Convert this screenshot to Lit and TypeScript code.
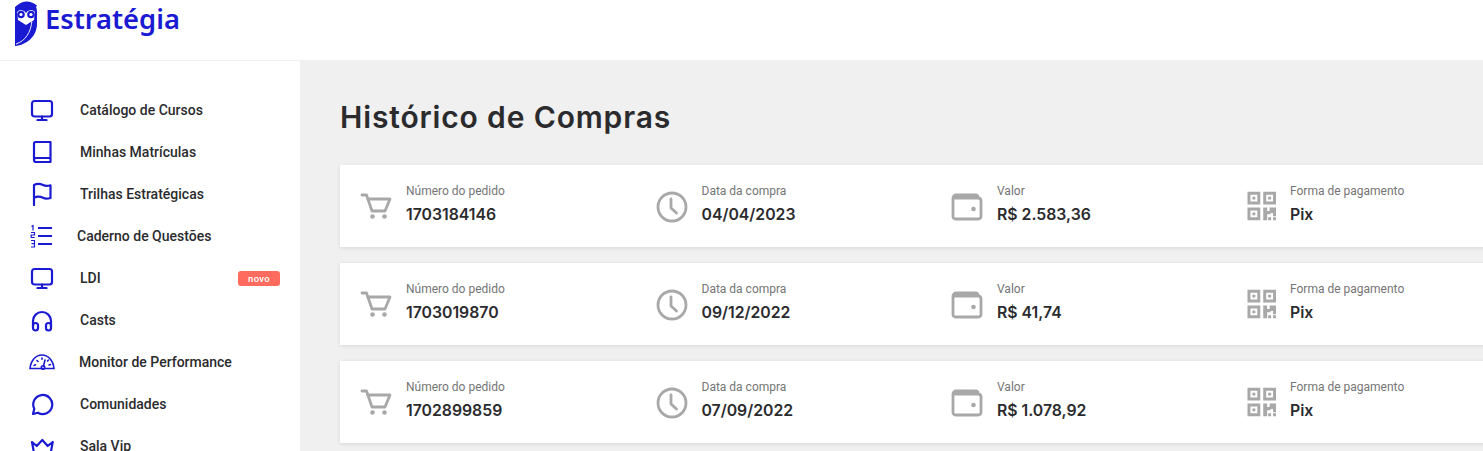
import { LitElement, html, css, svg } from "lit";
import { customElement } from "lit/decorators.js";

const blueIcon = (w: number, h: number, body: unknown) => html`<svg class="nav-svg" width=${w} height=${h} viewBox="0 0 ${w} ${h}" fill="none" stroke="#1a1ad2" stroke-width="2.200" stroke-linecap="round" stroke-linejoin="round">${body}</svg>`;

const monitor = blueIcon(24, 22, svg`<rect x="2" y="2" width="20" height="15.500" rx="2.500"/><path d="M12 17.500v3.500M7.500 21h9"/>`);
const book = blueIcon(24, 24, svg`<path d="M4 20V3.500A1.500 1.500 0 0 1 5.500 2H20.500v20H6a2 2 0 0 1-2-2a2 2 0 0 1 2-2h14.500"/>`);
const flag = blueIcon(24, 24, svg`<path d="M4 23V3c3-1.500 6-1.500 9 0s5 1 7.500.3V16c-3 .8-5 1-7.500-.3s-6-1.500-9 0"/>`);
const list = html`<svg class="nav-svg" width="24" height="24" viewBox="0 0 24 24" fill="none" stroke="#1a1ad2" stroke-width="2"><path d="M8 4h14M8 12h14M8 20h14" stroke-width="2"/><path d="M1.500 2.500l1.500-1v5M1 8.500h3.500v2.500H1.200v2.500h3.500M1 16.500h3.500v6.500H1M1.500 19.700h3" stroke-width="1.200"/></svg>`;
const phones = blueIcon(24, 24, svg`<path d="M3 18v-5a9 9 0 0 1 18 0v5"/><rect x="3" y="15" width="5" height="7.500" rx="2.500"/><rect x="16" y="15" width="5" height="7.500" rx="2.500"/>`);
const gauge = html`<svg class="nav-svg" width="26" height="18" viewBox="0 0 26 18" fill="none" stroke="#1a1ad2" stroke-width="1.600" stroke-linecap="round"><path d="M1 15.500C2 7 7 2 13 2s11 5 12 13.500z"/><circle cx="14" cy="14.500" r="1.700"/><path d="M14.500 13l1.500-6M5 12.500l1.500-.7M8 7.500l1 1M13 5v1.200M20 12l1.500-.5M18.500 8l1-1"/></svg>`;
const chat = blueIcon(24, 24, svg`<path d="M3 22l1.300-5.200A9.500 9.500 0 1 1 8 20.700z"/>`);
const crown = blueIcon(26, 16, svg`<path d="M3 4l4.700 4 5.600-6 5.400 6 5-4-2 11H5z"/>`);

const cart = html`<svg width="32" height="27" viewBox="0 0 32 27" fill="none" stroke="#a8a8a8" stroke-width="2.800" stroke-linejoin="round" stroke-linecap="round"><path d="M2 2h4.500l5.500 16h13l5-12H7.500"/><circle cx="12.500" cy="23.500" r="2.300" fill="#a8a8a8" stroke="none"/><circle cx="24.500" cy="23.500" r="2.300" fill="#a8a8a8" stroke="none"/></svg>`;
const clock = html`<svg width="32" height="32" viewBox="0 0 32 32" fill="none" stroke="#a8a8a8" stroke-width="2.800" stroke-linecap="round" stroke-linejoin="round"><circle cx="16" cy="16" r="14"/><path d="M15 8v9l5.500 5"/></svg>`;
const wallet = html`<svg width="32" height="28" viewBox="0 0 32 28" fill="none" stroke="#a8a8a8" stroke-width="2.800" stroke-linejoin="round"><path d="M27 5V4.500A2.500 2.500 0 0 0 24.500 2H5A3 3 0 0 0 2 5v18.500A2.500 2.500 0 0 0 4.500 26h23a2.500 2.500 0 0 0 2.500-2.500V8A3 3 0 0 0 27.500 5H3"/><circle cx="22.500" cy="16" r="2.300" fill="#a8a8a8" stroke="none"/></svg>`;
const qr = html`<svg width="30" height="30" viewBox="0 0 30 30" fill="#a8a8a8"><path fill-rule="evenodd" d="M.5 .5h13v13h-13zM3.500 3.500v7h7v-7zM16.500 .5h13v13h-13zM19.500 3.500v7h7v-7zM.5 16.500h13v13h-13zM3.500 19.500v7h7v-7z"/><path d="M5.500 5.500h3v3h-3zM21.500 5.500h3v3h-3zM5.500 21.500h3v3h-3zM16.500 16.500h4v13h-4zM20.500 20h3.500v3.500h-3.500zM23 16.500h6.500v9h-3v-3.500h-3.500zM21.500 26.500h3v3h-3zM26.500 26.500h3v3h-3z"/></svg>`;

const navItems = [
  { icon: monitor, label: "Catálogo de Cursos", cls: "" },
  { icon: book, label: "Minhas Matrículas", cls: "" },
  { icon: flag, label: "Trilhas Estratégicas", cls: "" },
  { icon: list, label: "Caderno de Questões", cls: "near3" },
  { icon: monitor, label: "LDI", cls: "", badge: "novo" },
  { icon: phones, label: "Casts", cls: "" },
  { icon: gauge, label: "Monitor de Performance", cls: "near1" },
  { icon: chat, label: "Comunidades", cls: "" },
  { icon: crown, label: "Sala Vip", cls: "" },
];

const orders = [
  { id: "1703184146", date: "04/04/2023", value: "R$ 2.583,36", pay: "Pix" },
  { id: "1703019870", date: "09/12/2022", value: "R$ 41,74", pay: "Pix" },
  { id: "1702899859", date: "07/09/2022", value: "R$ 1.078,92", pay: "Pix" },
];

@customElement("app-root")
export class AppRoot extends LitElement {
  static styles = css`
    :host { display: block; width: 1483px; height: 451px; overflow: hidden; background: #f0f0f0; font-family: Roboto, sans-serif; }
    .header { height: 60px; background: #fff; border-bottom: 2px solid #f0f0f0; display: flex; align-items: flex-start; }
    .logo { display: flex; align-items: flex-start; }
    .owl { display: block; margin-left: 15px; margin-top: 1px; }
    .brand { color: #1a1ad2; font: 600 27.300px/1 "Noto Sans", sans-serif; margin-left: 6px; margin-top: 5px; }
    .layout { display: flex; height: 390px; margin-top: -1px; }
    .side { width: 300px; flex: none; background: #fff; padding-top: 28px; box-sizing: border-box; }
    .nav { display: flex; align-items: center; height: 42px; padding: 0 20px 0 30px; }
    .ico { width: 24px; height: 24px; display: flex; align-items: center; justify-content: center; flex: none; }
    .nav-svg { display: block; flex: none; }
    .lbl { margin-left: 26px; font-size: 14px; font-weight: 500; color: #2b2b2e; flex: 1; white-space: nowrap; }
    .near3 .lbl { margin-left: 23px; }
    .near1 .lbl { margin-left: 25px; }
    .badge { background: #ff6b5e; color: #fff; font-size: 9.500px; line-height: 15px; height: 15px; width: 42px; text-align: center; border-radius: 3px; font-weight: 500; letter-spacing: 0.3px; }
    .main { flex: 1; padding: 0 0 0 40px; min-width: 0; }
    h1 { margin: 38px 0 30px; font: 600 30px/36px Inter, sans-serif; color: #2b2b2e; letter-spacing: 0.85px; }
    .cards { display: flex; flex-direction: column; gap: 16px; width: 1183px; }
    .card { background: #fff; height: 82px; box-shadow: 0 1px 4px rgba(0,0,0,.1); display: grid; grid-template-columns: repeat(4, 295.500px); padding-left: 20px; align-items: center; box-sizing: border-box; }
    .cell { display: flex; align-items: center; }
    .gi { width: 32px; display: flex; justify-content: center; flex: none; margin-top: 1px; }
    .tight .gi { width: 29.500px; margin-top: 0; }
    .txt { margin-left: 14px; margin-bottom: 4px; }
    .k { font-size: 12px; line-height: 16px; color: #757575; }
    .v { font: 600 15.800px/22px Inter, sans-serif; color: #2b2b2e; margin-top: 5px; white-space: nowrap; }
  `;

  render() {
    return html`
      <div class="header">
        <div class="logo">
          <svg class="owl" width="24" height="46" viewBox="0 0 24 46">
            <path fill="#1a1ad2" d="M0 6C5 1.500 9 .5 12 .5s6.500 1.500 10 4l-1 1.500c1 2 1 4 1 8v9C22 35 12 44 0 45z"/>
            <path fill="#fff" d="M2 11a5.500 5.500 0 0 1 9 1 5.500 5.500 0 0 1 9-1l-1 8-8 5-8-5z"/>
            <circle cx="6" cy="13.500" r="3.800" fill="#1a1ad2"/><circle cx="16" cy="13.500" r="3.800" fill="#1a1ad2"/>
            <circle cx="6" cy="13.500" r="1.600" fill="#fff"/><circle cx="16" cy="13.500" r="1.600" fill="#fff"/>
            <path fill="none" stroke="#fff" stroke-width=".9" d="M1 43c9-3 15-11 16-24"/>
          </svg>
          <div class="brand">Estratégia</div>
        </div>
      </div>
      <div class="layout">
        <div class="side">
          ${navItems.map((n) => html`<div class="nav ${n.cls}"><span class="ico">${n.icon}</span><span class="lbl">${n.label}</span>${n.badge ? html`<span class="badge">${n.badge}</span>` : ""}</div>`)}
        </div>
        <div class="main">
          <h1>Histórico de Compras</h1>
          <div class="cards">
            ${orders.map((o) => html`<div class="card">
              ${this.cell(cart, "Número do pedido", o.id)}
              ${this.cell(clock, "Data da compra", o.date)}
              ${this.cell(wallet, "Valor", o.value)}
              ${this.cell(qr, "Forma de pagamento", o.pay, "tight")}
            </div>`)}
          </div>
        </div>
      </div>
    `;
  }

  private cell(icon: unknown, k: string, v: string, cls = "") {
    return html`<div class="cell ${cls}"><span class="gi">${icon}</span><div class="txt"><div class="k">${k}</div><div class="v">${v}</div></div></div>`;
  }
}
